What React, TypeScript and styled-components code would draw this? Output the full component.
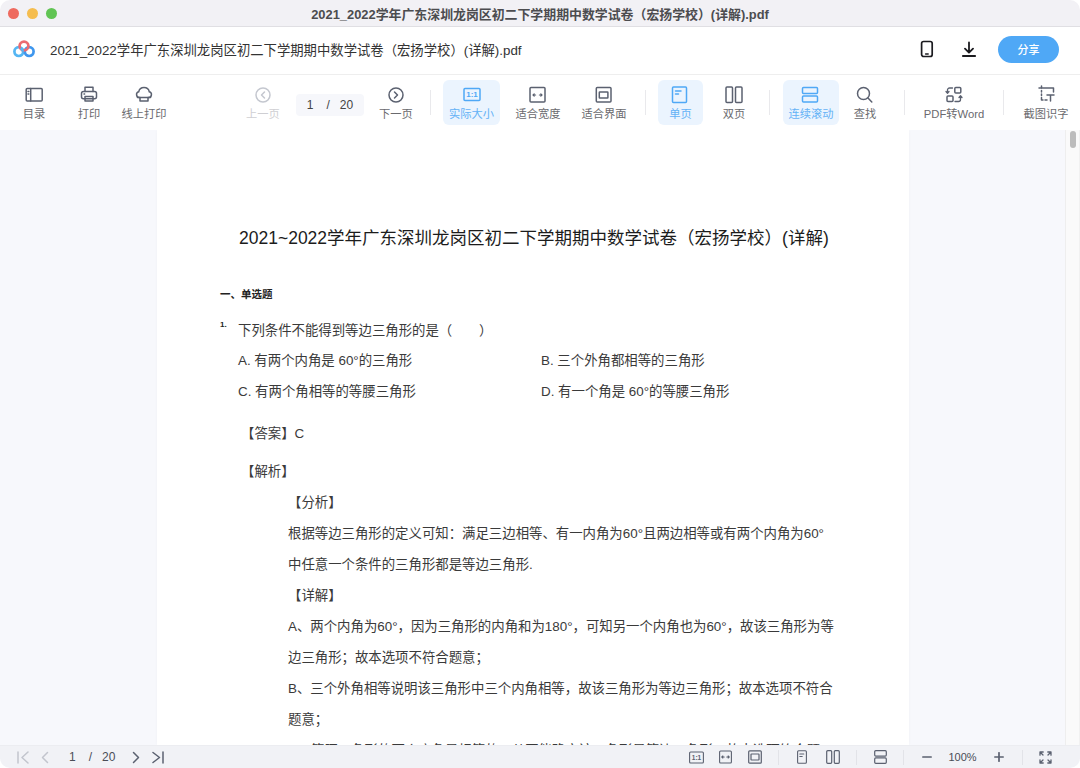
import React from 'react';
import styled, { createGlobalStyle } from 'styled-components';

const CJK = `"Liberation Sans", "Noto Sans CJK SC", sans-serif`;
const FILE_NAME = '2021_2022学年广东深圳龙岗区初二下学期期中数学试卷（宏扬学校）(详解).pdf';

const GlobalStyle = createGlobalStyle`
  html, body { margin: 0; padding: 0; background: #fff; }
  body { font-family: ${CJK}; }
  * { box-sizing: border-box; }
`;

const Window = styled.div`
  width: 1080px;
  height: 768px;
  display: flex;
  flex-direction: column;
  overflow: hidden;
  border-radius: 10px;
  background: #fff;
`;

const TitleBar = styled.div`
  height: 27px;
  flex: none;
  display: flex;
  align-items: center;
  position: relative;
  padding-left: 8px;
  gap: 8px;
  background: #f2f1f5;
  border-bottom: 1px solid #e0dfe3;
`;

const Light = styled.span<{ $color: string }>`
  width: 11px;
  height: 11px;
  border-radius: 50%;
  background: ${({ $color }) => $color};
`;

const WindowTitle = styled.div`
  position: absolute;
  left: 0;
  right: 0;
  text-align: center;
  font-size: 12.9px;
  font-weight: 700;
  color: #4c4c4f;
`;

const Header = styled.div`
  height: 48px;
  flex: none;
  display: flex;
  align-items: center;
  padding: 0 21px 3px 13px;
  border-bottom: 1px solid #eeeeee;
`;

const FileName = styled.div`
  margin-left: 15px;
  flex: 1;
  font-size: 13.35px;
  color: #333;
`;

const HeaderIcon = styled.span<{ $gap: number }>`
  display: flex;
  margin-right: ${({ $gap }) => $gap}px;
  color: #1b1b1f;
`;

const ShareButton = styled.button`
  width: 61px;
  height: 27px;
  border: none;
  border-radius: 14px;
  background: #4fa8f6;
  color: #fff;
  font-family: ${CJK};
  font-size: 11px;
  font-weight: 500;
`;

const Toolbar = styled.div`
  height: 55px;
  flex: none;
  display: flex;
  align-items: center;
  padding-left: 6px;
`;

const Tool = styled.div<{ $w: number; $active?: boolean; $disabled?: boolean; $ml?: number }>`
  width: ${({ $w }) => $w}px;
  height: 45px;
  flex: none;
  margin-left: ${({ $ml }) => $ml ?? 0}px;
  display: flex;
  flex-direction: column;
  align-items: center;
  justify-content: space-between;
  padding: 5px 0 4px;
  border-radius: 6px;
  background: ${({ $active }) => ($active ? '#ebf4fe' : 'transparent')};
  color: ${({ $active, $disabled }) => ($active ? '#4fa8f6' : $disabled ? '#c4c7cf' : '#5b6170')};
`;

const ToolLabel = styled.span<{ $active?: boolean; $disabled?: boolean }>`
  font-size: 11.25px;
  line-height: 14px;
  white-space: nowrap;
  color: ${({ $active, $disabled }) => ($active ? '#64b2f6' : $disabled ? '#cfcfd3' : '#6a6a6e')};
`;

const ToolDivider = styled.span<{ $ml: number }>`
  width: 1px;
  height: 25px;
  flex: none;
  margin-left: ${({ $ml }) => $ml}px;
  background: #e9e9ec;
`;

const PageBox = styled.div`
  width: 68px;
  height: 22px;
  flex: none;
  margin: 0 10px;
  display: flex;
  align-items: center;
  justify-content: center;
  gap: 10px;
  border-radius: 4px;
  background: #f6f7fb;
  font-size: 12px;
  color: #444;
  position: relative;
  top: 2px;
`;

const CurrentPage = styled.span`
  margin-right: 3px;
`;

const Viewer = styled.div`
  flex: 1;
  min-height: 0;
  display: flex;
  overflow: hidden;
  background: #f7f8fc;
`;

const Gutter = styled.div<{ $w: number }>`
  width: ${({ $w }) => $w}px;
  flex: none;
`;

const Page = styled.div`
  width: 752px;
  flex: none;
  background: #fff;
  padding: 93px 0 0 63px;
  color: #3a3a3a;
  box-shadow: 0 0 3px rgba(0, 0, 0, 0.03);
`;

const DocTitle = styled.h1`
  margin: 0 0 31px 19px;
  font-size: 17.5px;
  font-weight: 400;
  line-height: 30px;
  white-space: nowrap;
  color: #1c1c1c;
`;

const Section = styled.h2`
  margin: 0 0 11px;
  font-size: 10.5px;
  font-weight: 700;
  line-height: 20px;
  color: #222;
`;

const Line = styled.div<{ $indent?: number; $gap?: number }>`
  height: 31px;
  margin-left: ${({ $indent }) => $indent ?? 0}px;
  margin-top: ${({ $gap }) => $gap ?? 0}px;
  font-size: 13.4px;
  line-height: 31px;
  white-space: nowrap;
  position: relative;
`;

const Number = styled.span`
  position: absolute;
  left: -18px;
  top: -6px;
  font-size: 8px;
  font-weight: 700;
  color: #222;
`;

const Options = styled.div`
  margin: -1px 0 0 18px;
  display: grid;
  grid-template-columns: 303px 1fr;
  font-size: 13.4px;
  line-height: 31px;
  white-space: nowrap;
`;

const Scrollbar = styled.div`
  width: 15px;
  flex: none;
  padding: 1px 3px 0 4px;
  background: #fafafa;
  border-left: 1px solid #eeeeee;
  border-right: 1px solid #f1f1f1;
`;

const ScrollThumb = styled.div`
  height: 17px;
  border-radius: 4px;
  background: #bcbcbc;
`;

const StatusBar = styled.div`
  height: 23px;
  flex: none;
  display: flex;
  align-items: center;
  padding-left: 17px;
  background: #f1f2f6;
  border-top: 1px solid #ecedf1;
  color: #5b6170;
`;

const StatusIcon = styled.span<{ $ml: number; $faded?: boolean }>`
  display: flex;
  flex: none;
  margin-left: ${({ $ml }) => $ml}px;
  color: ${({ $faded }) => ($faded ? '#c2c5cd' : '#5b6170')};
`;

const StatusText = styled.span<{ $ml: number; $small?: boolean }>`
  flex: none;
  margin-left: ${({ $ml }) => $ml}px;
  font-size: ${({ $small }) => ($small ? 11 : 12)}px;
  color: #4a4d57;
`;

const StatusDivider = styled.span<{ $ml: number }>`
  width: 1px;
  height: 15px;
  flex: none;
  margin-left: ${({ $ml }) => $ml}px;
  background: #e2e3e8;
`;

type IconProps = { size?: number; children: React.ReactNode; w?: number; h?: number; sw?: number };

const Ico = ({ size = 20, w, h, sw = 1.5, children }: IconProps) => (
  <svg
    width={w ?? size}
    height={h ?? size}
    viewBox={`0 0 ${w ?? size} ${h ?? size}`}
    fill="none"
    stroke="currentColor"
    strokeWidth={sw}
    strokeLinecap="round"
    strokeLinejoin="round"
  >
    {children}
  </svg>
);

const Logo = () => (
  <svg width="22" height="18" viewBox="0 0 22 18" fill="none" strokeWidth="2.7">
    <circle cx="5.8" cy="11.6" r="4.4" stroke="#55b6f3" />
    <circle cx="16.2" cy="11.6" r="4.4" stroke="#3f97ee" />
    <circle cx="11" cy="6" r="4.4" stroke="#ec6a70" />
    <path d="M7.6 8.3 A4.4 4.4 0 0 1 10 11.6" stroke="#55b6f3" />
  </svg>
);

const TocIcon = () => (
  <Ico>
    <rect x="2.2" y="3.5" width="16" height="12.5" rx="1" />
    <path d="M6.7 3.5v12.5M4 6.5h.8M4 9h.8" />
  </Ico>
);

const PrintIcon = () => (
  <Ico>
    <path d="M6 6.5V2.2h8v4.3" />
    <rect x="2.5" y="6.5" width="15" height="7.2" rx="2" />
    <path d="M6 11.5v4.5h8v-4.5zM5 9h.6" />
  </Ico>
);

const CloudPrintIcon = () => (
  <Ico>
    <path d="M6 12.5H5.4a2.9 2.9 0 0 1-.7-5.7 5.4 5.4 0 0 1 10.6 0 2.9 2.9 0 0 1-.7 5.7H14" />
    <path d="M3.5 12.5h13M6 12.5V16h8v-3.5" />
  </Ico>
);

const Circled = ({ dir }: { dir: 'l' | 'r' }) => (
  <Ico>
    <circle cx="10" cy="10" r="7" />
    <path d={dir === 'l' ? 'M11.5 7l-3 3 3 3' : 'M8.5 7l3 3-3 3'} />
  </Ico>
);

const RatioIcon = () => (
  <Ico>
    <rect x="2" y="3.5" width="16" height="12" rx="1" />
    <text x="10" y="12.3" textAnchor="middle" fontSize="8" fontWeight="700" fill="currentColor" stroke="none" fontFamily="Liberation Sans, sans-serif">
      1:1
    </text>
  </Ico>
);

const FitWidthIcon = () => (
  <Ico>
    <rect x="2" y="2.5" width="15" height="14.5" rx="1" />
    <path d="M5 10h2.6M11.4 10H14M6.2 8.8L5 10l1.2 1.2M12.8 8.8L14 10l-1.2 1.2" strokeWidth="1.2" />
  </Ico>
);

const FitPageIcon = () => (
  <Ico>
    <rect x="2.3" y="2.5" width="14.7" height="14.5" rx="1" />
    <rect x="5.3" y="7" width="8.6" height="6" rx="0.5" />
  </Ico>
);

const SinglePageIcon = () => (
  <Ico>
    <rect x="1.5" y="2" width="14" height="15.5" rx="1" />
    <path d="M4.5 6h5.5M4.5 9h3" />
  </Ico>
);

const DoublePageIcon = () => (
  <Ico>
    <rect x="2" y="2" width="6.5" height="15.5" rx="1" />
    <rect x="11.5" y="2" width="6.5" height="15.5" rx="1" />
  </Ico>
);

const ScrollIcon = () => (
  <Ico>
    <rect x="1.5" y="2.5" width="15" height="6" rx="1" />
    <rect x="1.5" y="11" width="15" height="6" rx="1" />
  </Ico>
);

const SearchIcon = () => (
  <Ico>
    <circle cx="8.5" cy="8.5" r="6" />
    <path d="M13 13l3.8 4" />
  </Ico>
);

const ConvertIcon = () => (
  <Ico>
    <rect x="10.8" y="2.5" width="6" height="5.5" rx="1" />
    <rect x="3" y="11" width="6" height="5.5" rx="1" />
    <path d="M8.5 3H5.5a2 2 0 0 0-2 2v3M2 6.5L3.5 8.2 5 6.5M11 16.5h3.5a2 2 0 0 0 2-2V11M15 12.5l1.5-1.7 1.5 1.7" strokeWidth="1.3" />
  </Ico>
);

const CropIcon = () => (
  <Ico>
    <path d="M5.5 1v2.2M3 3h14.5v4" />
    <path d="M5.5 5.5v1.5M5.5 9v1.5M5.5 12.5V15H7M9 15h2" />
    <path d="M11 10h7M14.5 10v6" />
  </Ico>
);

const PhoneIcon = () => (
  <Ico w={14} h={18}>
    <rect x="1.6" y="1.5" width="10.6" height="15" rx="2" strokeWidth="1.7" />
    <path d="M5.6 14h2.6" strokeWidth="1.4" />
  </Ico>
);

const DownloadIcon = () => (
  <Ico w={14} h={17}>
    <path d="M7 1.5v10M3 7.7L7 11.7l4-4M.8 15h12.4" strokeWidth="1.8" />
  </Ico>
);

const SmallRatioIcon = () => (
  <Ico w={15} h={13} sw={1.1}>
    <rect x="0.6" y="1" width="13.8" height="11" rx="1" />
    <text x="7.5" y="9" textAnchor="middle" fontSize="6.5" fontWeight="700" fill="currentColor" stroke="none" fontFamily="Liberation Sans, sans-serif">
      1:1
    </text>
  </Ico>
);

const SmallFitWidthIcon = () => (
  <Ico w={13} h={14} sw={1.1}>
    <rect x="0.6" y="1" width="11.8" height="12" rx="1" />
    <path d="M2.8 7h2.4M7.8 7h2.4M3.8 6L2.8 7l1 1M9.2 6l1 1-1 1" />
  </Ico>
);

const SmallFitPageIcon = () => (
  <Ico w={14} h={14} sw={1.2}>
    <rect x="0.7" y="0.8" width="12.6" height="12.4" rx="1" />
    <rect x="3" y="4" width="8" height="6" rx="0.5" />
  </Ico>
);

const SmallSinglePageIcon = () => (
  <Ico w={10} h={14} sw={1.1}>
    <rect x="0.6" y="0.7" width="8.8" height="12.6" rx="1" />
    <path d="M2.8 4h4M2.8 6.5h2.4" />
  </Ico>
);

const SmallDoublePageIcon = () => (
  <Ico w={14} h={14} sw={1.2}>
    <rect x="0.7" y="0.7" width="5" height="12.6" rx="1" />
    <rect x="8.3" y="0.7" width="5" height="12.6" rx="1" />
  </Ico>
);

const SmallScrollIcon = () => (
  <Ico w={13} h={14} sw={1.2}>
    <rect x="0.7" y="0.7" width="11.6" height="5.4" rx="1" />
    <rect x="0.7" y="7.9" width="11.6" height="5.4" rx="1" />
  </Ico>
);

const Chevrons = {
  first: 'M1 1v11M11 1L5 6.5 11 12',
  prev: 'M7.5 1.5L2.5 6.5l5 5',
  next: 'M2.5 1.5l5 5-5 5',
  last: 'M1 1.5l6.5 5-6.5 5M11 1v11',
};

const Pager = ({ kind }: { kind: keyof typeof Chevrons }) => (
  <Ico w={12} h={13}>
    <path d={Chevrons[kind]} />
  </Ico>
);

const MinusIcon = () => (
  <Ico size={10} sw={1.7}>
    <path d="M.8 5h8.4" />
  </Ico>
);

const PlusIcon = () => (
  <Ico size={10} sw={1.7}>
    <path d="M.8 5h8.4M5 .8v8.4" />
  </Ico>
);

const FullscreenIcon = () => (
  <Ico size={13} sw={1.3}>
    <path d="M1 4.2V1h3.2M1.2 1.2l2.8 2.8M12 4.2V1H8.8M11.8 1.2L9 4M1 8.8V12h3.2M1.2 11.8L4 9M12 8.8V12H8.8M11.8 11.8L9 9" />
  </Ico>
);

const App = () => (
  <>
    <GlobalStyle />
    <Window>
      <TitleBar>
        <Light $color="#ee6a5f" />
        <Light $color="#f5bd4f" />
        <Light $color="#61c454" />
        <WindowTitle>{FILE_NAME}</WindowTitle>
      </TitleBar>

      <Header>
        <Logo />
        <FileName>{FILE_NAME}</FileName>
        <HeaderIcon $gap={28}><PhoneIcon /></HeaderIcon>
        <HeaderIcon $gap={22}><DownloadIcon /></HeaderIcon>
        <ShareButton>分享</ShareButton>
      </Header>

      <Toolbar>
        <Tool $w={56}><TocIcon /><ToolLabel>目录</ToolLabel></Tool>
        <Tool $w={54}><PrintIcon /><ToolLabel>打印</ToolLabel></Tool>
        <Tool $w={56}><CloudPrintIcon /><ToolLabel>线上打印</ToolLabel></Tool>
        <Tool $w={46} $ml={68} $disabled><Circled dir="l" /><ToolLabel $disabled>上一页</ToolLabel></Tool>
        <PageBox><CurrentPage>1</CurrentPage><span>/</span><span>20</span></PageBox>
        <Tool $w={44}><Circled dir="r" /><ToolLabel>下一页</ToolLabel></Tool>
        <ToolDivider $ml={12} />
        <Tool $w={57} $ml={12} $active><RatioIcon /><ToolLabel $active>实际大小</ToolLabel></Tool>
        <Tool $w={76}><FitWidthIcon /><ToolLabel>适合宽度</ToolLabel></Tool>
        <Tool $w={56}><FitPageIcon /><ToolLabel>适合界面</ToolLabel></Tool>
        <ToolDivider $ml={13} />
        <Tool $w={45} $ml={12} $active><SinglePageIcon /><ToolLabel $active>单页</ToolLabel></Tool>
        <Tool $w={62}><DoublePageIcon /><ToolLabel>双页</ToolLabel></Tool>
        <ToolDivider $ml={4} />
        <Tool $w={56} $ml={13} $active><ScrollIcon /><ToolLabel $active>连续滚动</ToolLabel></Tool>
        <Tool $w={52}><SearchIcon /><ToolLabel>查找</ToolLabel></Tool>
        <ToolDivider $ml={13} />
        <Tool $w={98}><ConvertIcon /><ToolLabel>PDF转Word</ToolLabel></Tool>
        <ToolDivider $ml={0} />
        <Tool $w={68} $ml={8}><CropIcon /><ToolLabel>截图识字</ToolLabel></Tool>
      </Toolbar>

      <Viewer>
        <Gutter $w={157} />
        <Page>
          <DocTitle>2021~2022学年广东深圳龙岗区初二下学期期中数学试卷（宏扬学校）(详解)</DocTitle>
          <Section>一、单选题</Section>
          <Line $indent={18}><Number>1.</Number>下列条件不能得到等边三角形的是（　　）</Line>
          <Options>
            <span>A. 有两个内角是 60°的三角形</span>
            <span>B. 三个外角都相等的三角形</span>
            <span>C. 有两个角相等的等腰三角形</span>
            <span>D. 有一个角是 60°的等腰三角形</span>
          </Options>
          <Line $indent={21} $gap={11}>【答案】C</Line>
          <Line $indent={21} $gap={7}>【解析】</Line>
          <Line $indent={68}>【分析】</Line>
          <Line $indent={68}>根据等边三角形的定义可知：满足三边相等、有一内角为60°且两边相等或有两个内角为60°</Line>
          <Line $indent={68}>中任意一个条件的三角形都是等边三角形.</Line>
          <Line $indent={68}>【详解】</Line>
          <Line $indent={68}>A、两个内角为60°，因为三角形的内角和为180°，可知另一个内角也为60°，故该三角形为等</Line>
          <Line $indent={68}>边三角形；故本选项不符合题意；</Line>
          <Line $indent={68}>B、三个外角相等说明该三角形中三个内角相等，故该三角形为等边三角形；故本选项不符合</Line>
          <Line $indent={68}>题意；</Line>
          <Line $indent={68}>C、等腰三角形的两个底角是相等的，从不能确定该三角形是等边三角形，故本选项符合题</Line>
        </Page>
        <Gutter $w={156} />
        <Scrollbar><ScrollThumb /></Scrollbar>
      </Viewer>

      <StatusBar>
        <StatusIcon $ml={0} $faded><Pager kind="first" /></StatusIcon>
        <StatusIcon $ml={11} $faded><Pager kind="prev" /></StatusIcon>
        <StatusText $ml={17}>1</StatusText>
        <StatusText $ml={13}>/</StatusText>
        <StatusText $ml={10}>20</StatusText>
        <StatusIcon $ml={16}><Pager kind="next" /></StatusIcon>
        <StatusIcon $ml={9}><Pager kind="last" /></StatusIcon>
        <StatusIcon $ml={525}><SmallRatioIcon /></StatusIcon>
        <StatusIcon $ml={15}><SmallFitWidthIcon /></StatusIcon>
        <StatusIcon $ml={16}><SmallFitPageIcon /></StatusIcon>
        <StatusDivider $ml={16} />
        <StatusIcon $ml={18}><SmallSinglePageIcon /></StatusIcon>
        <StatusIcon $ml={19}><SmallDoublePageIcon /></StatusIcon>
        <StatusDivider $ml={16} />
        <StatusIcon $ml={17}><SmallScrollIcon /></StatusIcon>
        <StatusDivider $ml={16} />
        <StatusIcon $ml={18}><MinusIcon /></StatusIcon>
        <StatusText $ml={16} $small>100%</StatusText>
        <StatusIcon $ml={17}><PlusIcon /></StatusIcon>
        <StatusDivider $ml={18} />
        <StatusIcon $ml={16}><FullscreenIcon /></StatusIcon>
      </StatusBar>
    </Window>
  </>
);

export default App;
